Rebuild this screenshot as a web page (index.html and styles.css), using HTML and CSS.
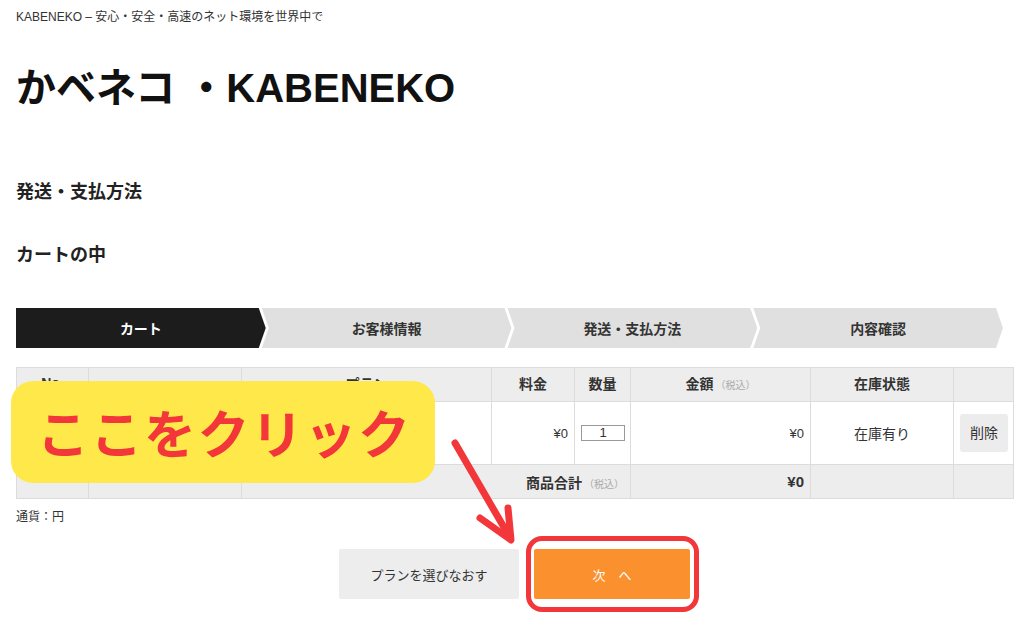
FILE: index.html
```html
<!DOCTYPE html>
<html lang="ja">
<head>
<meta charset="utf-8">
<title>かベネコ ・KABENEKO</title>
<link rel="stylesheet" href="styles.css">
</head>
<body>
<div class="page">
  <p class="tagline">KABENEKO – 安心・安全・高速のネット環境を世界中で</p>
  <h1 class="site-title">かベネコ ・KABENEKO</h1>
  <h2 class="sec-title first">発送・支払方法</h2>
  <h2 class="sec-title second">カートの中</h2>

  <ol class="steps">
    <li class="step step-active">カート</li>
    <li class="step">お客様情報</li>
    <li class="step">発送・支払方法</li>
    <li class="step">内容確認</li>
  </ol>

  <table class="cart">
    <colgroup>
      <col class="col-no">
      <col class="col-img">
      <col class="col-plan">
      <col class="col-price">
      <col class="col-qty">
      <col class="col-amount">
      <col class="col-stock">
      <col class="col-del">
    </colgroup>
    <thead>
      <tr class="row-head">
        <th>No.</th>
        <th></th>
        <th>プラン</th>
        <th>料金</th>
        <th>数量</th>
        <th>金額<span class="tax">（税込）</span></th>
        <th>在庫状態</th>
        <th></th>
      </tr>
    </thead>
    <tbody>
      <tr class="row-item">
        <td></td>
        <td></td>
        <td></td>
        <td class="r">¥0</td>
        <td class="c"><span class="qty">1</span></td>
        <td class="r">¥0</td>
        <td class="c stock">在庫有り</td>
        <td class="c"><span class="del">削除</span></td>
      </tr>
    </tbody>
    <tfoot>
      <tr class="row-foot">
        <td></td>
        <td></td>
        <td colspan="3" class="r total-label">商品合計<span class="tax">（税込）</span></td>
        <td class="r total">¥0</td>
        <td></td>
        <td></td>
      </tr>
    </tfoot>
  </table>

  <p class="currency">通貨：円</p>

  <div class="actions">
    <span class="btn btn-back">プランを選びなおす</span>
    <span class="btn-wrap"><span class="btn btn-next">次　へ</span></span>
  </div>
</div>

<div class="callout">ここをクリック</div>
<svg class="arrow" width="90" height="130" viewBox="0 0 90 130">
  <path d="M15 18 L69 111" stroke="#f2363a" stroke-width="7" stroke-linecap="round" fill="none"/>
  <path d="M40 93 L71 115 L68 83" stroke="#f2363a" stroke-width="7" stroke-linecap="round" stroke-linejoin="round" fill="none"/>
</svg>
</body>
</html>
```

FILE: styles.css
```css
* { box-sizing: border-box; }

html, body {
  min-height: 100%;
}

body {
  margin: 0;
  background: #fff;
  color: #222;
  font-family: "Liberation Sans", "Noto Sans CJK JP", sans-serif;
}

.page {
  padding: 8px 11px 28px 16px;
}

.tagline {
  margin: 0;
  font-size: 12px;
  line-height: 18px;
  color: #333;
}

.site-title {
  margin: 38px 0 0;
  font-size: 40px;
  line-height: 48px;
  font-weight: 700;
  color: #111;
}

.sec-title {
  margin: 0;
  font-size: 18px;
  line-height: 26px;
  font-weight: 700;
  color: #222;
}

.sec-title.first { margin-top: 67px; }
.sec-title.second { margin-top: 37px; }

.steps {
  list-style: none;
  margin: 40px 10px 0 0;
  padding: 0;
  display: flex;
  height: 40px;
}

.step {
  flex: 1;
  display: flex;
  align-items: center;
  justify-content: center;
  background: #e0e0e0;
  color: #333;
  font-size: 14px;
  font-weight: 700;
  margin-left: -4px;
  clip-path: polygon(0 0, calc(100% - 7px) 0, 100% 50%, calc(100% - 7px) 100%, 0 100%, 7px 50%);
}

.step-active {
  margin-left: 0;
  background: #1c1c1c;
  color: #fff;
  clip-path: polygon(0 0, calc(100% - 7px) 0, 100% 50%, calc(100% - 7px) 100%, 0 100%);
}

.cart {
  margin-top: 19px;
  width: 997px;
  border-collapse: collapse;
  table-layout: fixed;
  font-size: 13px;
  color: #333;
}

.col-no { width: 72px; }
.col-img { width: 153px; }
.col-plan { width: 250px; }
.col-price { width: 83px; }
.col-qty { width: 56px; }
.col-amount { width: 180px; }
.col-stock { width: 143px; }
.col-del { width: 60px; }

.cart th, .cart td {
  border: 1px solid #dcdcdc;
  padding: 0 6px;
}

.row-head { height: 34px; background: #ededed; }
.row-head th { font-weight: 700; font-size: 14px; color: #333; padding-bottom: 4px; }
.row-item { height: 63px; background: #fff; }
.row-foot { height: 34px; background: #ededed; }

.c { text-align: center; }
.r { text-align: right; }

.tax {
  font-size: 10px;
  font-weight: 400;
  color: #aaa;
  margin-left: 2px;
}

.qty {
  display: inline-block;
  width: 44px;
  height: 16px;
  line-height: 14px;
  border: 1px solid #999;
  font-size: 13px;
  text-align: center;
  background: #fff;
}

.stock { font-size: 14px; }

.del {
  display: inline-block;
  width: 48px;
  height: 38px;
  line-height: 38px;
  background: #ececec;
  border-radius: 3px;
  font-size: 14px;
  color: #333;
}

.total-label { font-weight: 700; font-size: 14px; }
.total { font-weight: 700; font-size: 15px; }

.currency {
  margin: 9px 0 0;
  font-size: 12px;
  line-height: 18px;
  color: #333;
}

.actions {
  margin-top: 23px;
  display: flex;
  justify-content: center;
  gap: 15px;
}

.btn {
  display: flex;
  align-items: center;
  justify-content: center;
  width: 180px;
  height: 50px;
  font-size: 13px;
  border-radius: 2px;
}

.btn-back {
  background: #ededed;
  color: #333;
}

.btn-wrap {
  position: relative;
}

.btn-wrap::after {
  content: "";
  position: absolute;
  left: -8px;
  top: -13px;
  right: -9px;
  bottom: -13px;
  border: 5px solid #f2363a;
  border-radius: 16px;
}

.btn-next {
  width: 156px;
  background: #fb912e;
  color: #fff;
}

.callout {
  position: absolute;
  left: 11px;
  top: 381px;
  width: 424px;
  height: 102px;
  background: #ffe94a;
  border-radius: 22px;
  color: #f2363a;
  font-family: "Noto Sans CJK JP", sans-serif;
  font-weight: 700;
  font-size: 52px;
  line-height: 102px;
  padding-left: 26px;
  letter-spacing: 1.5px;
}

.arrow {
  position: absolute;
  left: 440px;
  top: 425px;
}
```
